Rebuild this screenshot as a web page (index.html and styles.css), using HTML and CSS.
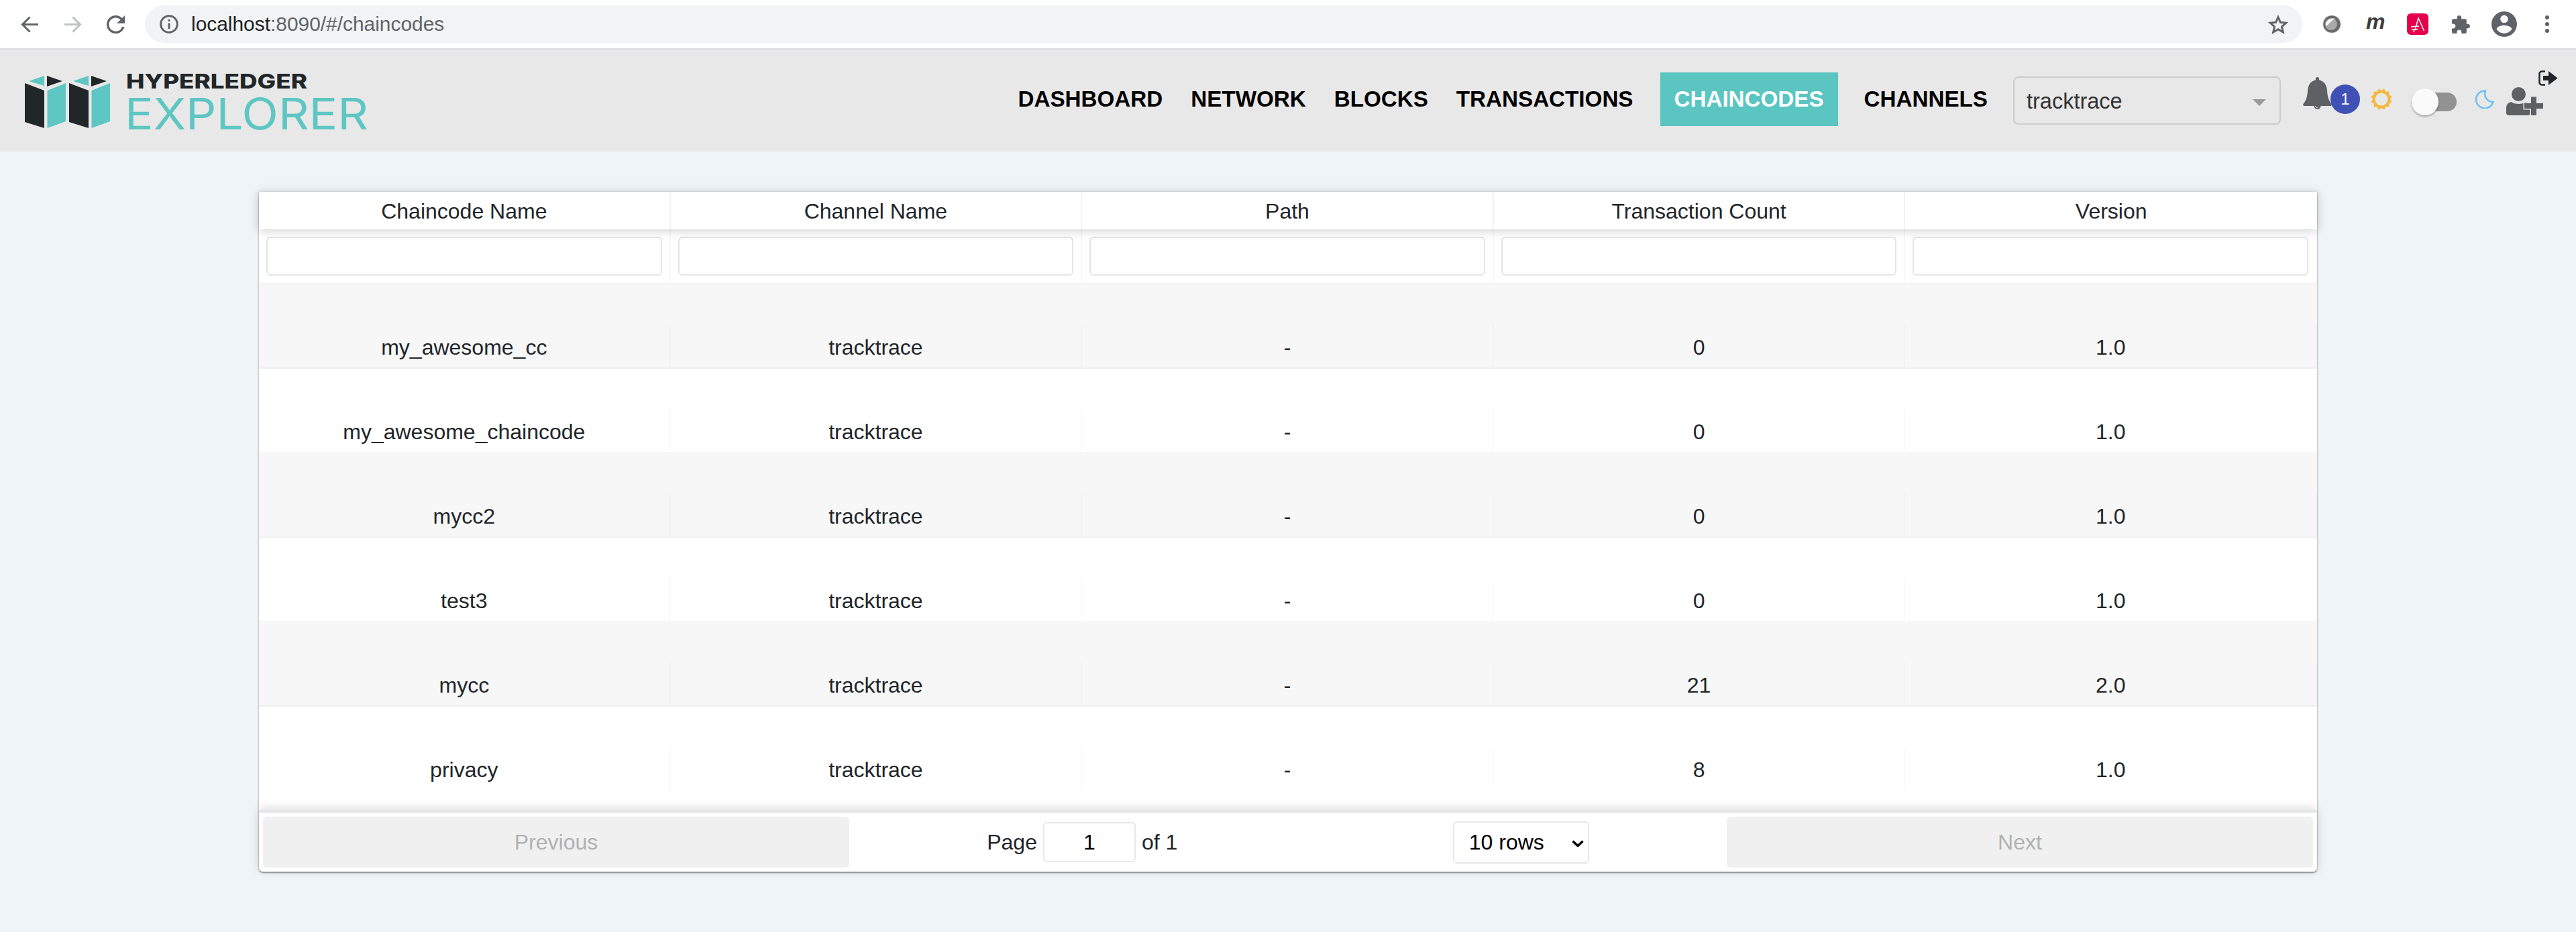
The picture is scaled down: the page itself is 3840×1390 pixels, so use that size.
FILE: index.html
```html
<!DOCTYPE html>
<html lang="en">
<head>
<meta charset="utf-8">
<title>Hyperledger Explorer</title>
<link rel="stylesheet" href="styles.css">
</head>
<body>
<div class="chrome">
  <svg class="c-back" viewBox="0 0 27 25"><path d="M26 12.5H3M13.500 1.500 2.500 12.500 13.500 23.500"/></svg>
  <svg class="c-fwd" viewBox="0 0 27 25"><path d="M1 12.500H24M13.500 1.500 24.500 12.500 13.500 23.500"/></svg>
  <svg class="c-reload" viewBox="4 4 16 16"><path d="M17.65 6.35A7.958 7.958 0 0 0 12 4c-4.42 0-7.99 3.58-7.99 8s3.57 8 7.990 8c3.73 0 6.84-2.55 7.730-6h-2.080A5.990 5.990 0 0 1 12 18c-3.310 0-6-2.690-6-6s2.690-6 6-6c1.660 0 3.140.690 4.220 1.780L13 11h7V4l-2.350 2.350z"/></svg>
  <div class="omnibox">
    <svg class="c-info" viewBox="0 0 28 28"><circle cx="14" cy="14" r="12.300"/><path d="M14 12.500V21M14 7v3"/></svg>
    <span class="url"><span class="url-host">localhost</span>:8090/#/chaincodes</span>
    <svg class="c-star" viewBox="0 0 30 29"><path d="M15 3.500 18.400 11.300 26.800 12.100 20.500 17.700 22.300 26 15 21.700 7.700 26 9.500 17.700 3.200 12.100 11.600 11.300Z"/></svg>
  </div>
  <svg class="ext-lens" viewBox="0 0 28 28"><circle cx="14" cy="14" r="14" fill="#e6e6e6"/><circle cx="14" cy="14" r="12.800" fill="#6a6a6a"/><circle cx="13" cy="14" r="9" fill="#a9a9a9"/><path d="M5 17C4 9 12 4 19 6 14 8 11 13 5 17Z" fill="#f6f6f6"/></svg>
  <span class="ext-m">m</span>
  <svg class="ext-red" viewBox="0 0 32 32"><rect width="32" height="32" rx="6" fill="#e4004a"/><path d="M12 25 17 7 25.500 26M6 20 18 19M7 24.500 16 23.500M11 24 10 28" fill="none" stroke="#fff" stroke-width="1.500"/></svg>
  <svg class="c-puzzle" viewBox="2 1 21 21"><path d="M20.500 11H19V7c0-1.100-.9-2-2-2h-4V3.500C13 2.120 11.880 1 10.500 1S8 2.120 8 3.500V5H4c-1.100 0-1.990.9-1.990 2v3.800H3.500c1.490 0 2.700 1.210 2.700 2.700s-1.210 2.700-2.700 2.700H2V20c0 1.100.9 2 2 2h3.800v-1.500c0-1.490 1.210-2.700 2.700-2.700 1.490 0 2.700 1.210 2.700 2.700V22H17c1.100 0 2-.9 2-2v-4h1.500c1.380 0 2.500-1.120 2.500-2.500S21.880 11 20.500 11z"/></svg>
  <svg class="c-avatar" viewBox="2 2 20 20"><path d="M12 2C6.480 2 2 6.480 2 12s4.480 10 10 10 10-4.480 10-10S17.520 2 12 2zm0 3c1.660 0 3 1.340 3 3s-1.340 3-3 3-3-1.340-3-3 1.340-3 3-3zm0 14.200c-2.500 0-4.710-1.280-6-3.220.03-1.990 4-3.080 6-3.080 1.990 0 5.970 1.090 6 3.080-1.290 1.940-3.500 3.220-6 3.220z"/></svg>
  <svg class="c-dots" viewBox="0 0 6 26"><circle cx="3" cy="3" r="3"/><circle cx="3" cy="13" r="3"/><circle cx="3" cy="23" r="3"/></svg>
</div>

<header class="topbar">
  <svg class="logo" viewBox="37 96 515 120">
    <g class="logo-dark">
      <path d="M37 124 66 135V191L37 182Z"/><path d="M70 113 93 121 70 129Z"/>
      <path d="M103 124 132 135V191L103 182Z"/><path d="M136 113 159 121 136 129Z"/>
    </g>
    <g class="logo-teal">
      <path d="M70.500 135 98 124V181L70.500 191Z"/><path d="M43 121 66 113V128Z"/>
      <path d="M136.500 135 164 124V181L136.500 191Z"/><path d="M109 121 132 113V128Z"/>
    </g>
    <text class="logo-top" x="188" y="132" textLength="270" lengthAdjust="spacingAndGlyphs">HYPERLEDGER</text>
    <text class="logo-bottom" x="186" y="193" textLength="363" lengthAdjust="spacingAndGlyphs">EXPLORER</text>
  </svg>
  <nav class="nav">
    <a class="nav-link">DASHBOARD</a>
    <a class="nav-link">NETWORK</a>
    <a class="nav-link">BLOCKS</a>
    <a class="nav-link">TRANSACTIONS</a>
    <a class="nav-link nav-active">CHAINCODES</a>
    <a class="nav-link nav-last">CHANNELS</a>
  </nav>
  <div class="channel-select">
    <span>tracktrace</span>
    <svg class="channel-caret" viewBox="0 0 20 10"><path d="M0 0H20L10 10Z"/></svg>
  </div>
  <div class="bell">
    <svg class="bell-icon" viewBox="0 0 43 48">
      <path d="M21.500 0c-1.600 0-2.600 1.100-2.600 2.700v1.500C11 6 7.500 12.500 7 20c-.6 10-2.500 15-5.800 19-1 1.200-1.400 2-1 3 .3.700 1 1 1.800 1h39c.8 0 1.500-.3 1.800-1 .4-1 0-1.800-1-3-3.300-4-5.200-9-5.800-19-.5-7.500-4-14-11.900-15.800V2.700C24.100 1.100 23.100 0 21.500 0z"/>
      <circle cx="21.500" cy="43" r="5"/><path class="bell-shine" d="M18.500 43a3 3 0 0 0 4 2.500"/>
    </svg>
    <span class="badge">1</span>
  </div>
  <svg class="sun" viewBox="0 0 32 32">
    <rect x="4.700" y="4.700" width="22.600" height="22.600"/>
    <rect x="4.700" y="4.700" width="22.600" height="22.600" transform="rotate(30 16 16)"/>
    <rect x="4.700" y="4.700" width="22.600" height="22.600" transform="rotate(60 16 16)"/>
    <circle class="sun-core" cx="16" cy="16" r="9.500"/>
  </svg>
  <div class="toggle"><span class="toggle-knob"></span></div>
  <svg class="moon" viewBox="0 0 28 28"><path d="M15 1.500A13 13 0 1 0 26.500 18 12 12 0 0 1 15 1.500Z"/></svg>
  <div class="user">
    <svg class="logout" viewBox="0 0 29 23">
      <path class="logout-frame" d="M10 1.500H5A3.500 3.500 0 0 0 1.500 5V18A3.500 3.500 0 0 0 5 21.500H10"/>
      <path d="M7 8H15V1L28.500 11.500 15 22V15H7Z"/>
    </svg>
    <svg class="user-plus" viewBox="0 0 55 42">
      <circle cx="18.500" cy="10.500" r="10.500"/>
      <path d="M7 22C3 23 0 26 0 31v7c0 2.500 1.500 4 4 4h28c2.500 0 4-1.500 4-4V31c0-5-3-8-7-9-3 2-6.500 3-10.500 3S10 24 7 22Z"/>
      <path class="plus-edge" d="M37 14.500h8v9.500h10v8H45v10h-8V32H27v-8h10Z"/>
    </svg>
  </div>
</header>

<main class="content">
  <section class="table">
    <div class="thead">
      <div class="th">Chaincode Name</div>
      <div class="th">Channel Name</div>
      <div class="th">Path</div>
      <div class="th">Transaction Count</div>
      <div class="th th-last">Version</div>
    </div>
    <div class="filters">
      <div class="filter"><input class="filter-input" type="text"></div>
      <div class="filter"><input class="filter-input" type="text"></div>
      <div class="filter"><input class="filter-input" type="text"></div>
      <div class="filter"><input class="filter-input" type="text"></div>
      <div class="filter filter-last"><input class="filter-input" type="text"></div>
    </div>
    <div class="tbody">
      <div class="row row-odd"><div class="td">my_awesome_cc</div><div class="td">tracktrace</div><div class="td">-</div><div class="td">0</div><div class="td td-last">1.0</div></div>
      <div class="row"><div class="td">my_awesome_chaincode</div><div class="td">tracktrace</div><div class="td">-</div><div class="td">0</div><div class="td td-last">1.0</div></div>
      <div class="row row-odd"><div class="td">mycc2</div><div class="td">tracktrace</div><div class="td">-</div><div class="td">0</div><div class="td td-last">1.0</div></div>
      <div class="row"><div class="td">test3</div><div class="td">tracktrace</div><div class="td">-</div><div class="td">0</div><div class="td td-last">1.0</div></div>
      <div class="row row-odd"><div class="td">mycc</div><div class="td">tracktrace</div><div class="td">-</div><div class="td">21</div><div class="td td-last">2.0</div></div>
      <div class="row row-end"><div class="td">privacy</div><div class="td">tracktrace</div><div class="td">-</div><div class="td">8</div><div class="td td-last">1.0</div></div>
    </div>
    <div class="pager">
      <button class="pager-btn" disabled>Previous</button>
      <div class="pager-center">
        <div class="page-info">
          <span>Page</span>
          <input class="page-input" type="text" value="1">
          <span>of 1</span>
        </div>
        <div class="size-wrap">
          <select class="size-select"><option>10 rows</option></select>
          <svg class="size-chevron" viewBox="0 0 18 10"><path d="M1.500 1.500 9 8.500 16.500 1.500"/></svg>
        </div>
      </div>
      <button class="pager-btn" disabled>Next</button>
    </div>
  </section>
</main>
</body>
</html>
```

FILE: styles.css
```css
* { box-sizing: border-box; }
html, body { margin: 0; padding: 0; }
body {
  width: 3840px;
  height: 1390px;
  overflow: hidden;
  background: #eff4f8;
  font-family: "Liberation Sans", Arial, sans-serif;
  font-size: 32px;
  color: #212529;
}

/* browser toolbar */
.chrome {
  height: 74px;
  display: flex;
  align-items: center;
  padding-left: 31px;
  background: #fff;
  border-bottom: 2px solid #dadce0;
}
.c-back, .c-fwd { width: 27px; height: 25px; fill: none; stroke-width: 3; }
.c-back { stroke: #5f6368; }
.c-fwd { stroke: #bdc1c6; margin-left: 37px; }
.c-reload { width: 27px; height: 27px; fill: #5f6368; margin-left: 37px; }
.omnibox {
  width: 3216px;
  height: 56px;
  margin-left: 30px;
  padding: 0 21px 0 22px;
  display: flex;
  align-items: center;
  background: #f1f3f4;
  border-radius: 28px;
}
.c-info { width: 28px; height: 28px; fill: none; stroke: #5f6368; stroke-width: 3; }
.url { margin-left: 19px; font-size: 29.900px; color: #5f6368; white-space: nowrap; }
.url-host { color: #202124; }
.c-star { width: 30px; height: 29px; margin-left: auto; fill: none; stroke: #5f6368; stroke-width: 3; }
.ext-lens { width: 28px; height: 28px; margin-left: 30px; }
.ext-m {
  width: 28px;
  margin-left: 37px;
  margin-bottom: 8px;
  font-size: 32px;
  font-weight: 700;
  font-style: italic;
  line-height: 1;
  color: #3c3c3c;
}
.ext-red { width: 32px; height: 32px; margin-left: 33px; }
.c-puzzle { width: 29px; height: 27px; margin-left: 34px; fill: #5f6368; }
.c-avatar { width: 38px; height: 38px; margin-left: 31px; fill: #5f6368; }
.c-dots { width: 6px; height: 26px; margin-left: 42px; fill: #5f6368; }

/* app header */
.topbar {
  height: 152px;
  display: flex;
  align-items: flex-start;
  padding: 0 27px 0 37px;
  background: #e8e8e8;
}
.logo { width: 515px; height: 120px; margin-top: 22px; flex: none; }
.logo-dark { fill: #212629; }
.logo-teal { fill: #5ec6c3; }
.logo-top { font-family: Inter, sans-serif; font-weight: 800; font-size: 30px; fill: #212629; }
.logo-bottom { font-family: Inter, sans-serif; font-weight: 400; font-size: 65px; fill: #5ec6c3; }
.nav { margin-left: auto; margin-top: 34px; display: flex; align-items: stretch; height: 80px; }
.nav-link {
  display: flex;
  align-items: center;
  padding: 0 21px;
  font-size: 33.200px;
  font-weight: 700;
  color: #000;
  white-space: nowrap;
}
.nav-active { background: #5bc5c2; color: #fff; margin-left: 19px; }
.nav-last { margin-left: 18px; }
.channel-select {
  width: 399px;
  height: 72px;
  margin: 40px 0 0 17px;
  padding: 3px 20px 0 18px;
  display: flex;
  align-items: center;
  justify-content: space-between;
  border: 2px solid #ccc;
  border-radius: 8px;
  font-size: 32.500px;
  color: #333;
}
.channel-caret { width: 20px; height: 10px; fill: #999; margin-top: 2px; }
.bell { position: relative; width: 85px; height: 55px; margin: 41px 0 0 33px; }
.bell-icon { width: 43px; height: 48px; fill: #5f6064; display: block; }
.bell-shine { fill: none; stroke: #d8d8d8; stroke-width: 1; }
.badge {
  position: absolute;
  left: 41px;
  top: 11px;
  width: 44px;
  height: 44px;
  display: flex;
  align-items: center;
  justify-content: center;
  border-radius: 50%;
  background: #3f51b5;
  color: #fff;
  font-size: 24px;
}
.sun { width: 32px; height: 32px; margin: 58px 0 0 16px; fill: #f5b83d; }
.sun-core { fill: #e8e8e8; }
.toggle {
  position: relative;
  width: 52px;
  height: 28px;
  margin: 64px 0 0 44px;
  border-radius: 14px;
  background: #929292;
}
.toggle-knob {
  position: absolute;
  left: -15px;
  top: -6px;
  width: 40px;
  height: 40px;
  border-radius: 50%;
  background: #fafafa;
  box-shadow: 0 2px 3px rgba(0, 0, 0, .3);
}
.moon { width: 28px; height: 28px; margin: 60px 0 0 28px; fill: none; stroke: #6cc0f4; stroke-width: 2.500; }
.user { position: relative; width: 77px; height: 98px; margin: 30px 0 0 18px; }
.logout { position: absolute; right: 0; top: 1px; width: 29px; height: 23px; fill: #212529; }
.logout-frame { fill: none; stroke: #212529; stroke-width: 2.500; }
.user-plus { position: absolute; left: 0; top: 26px; width: 55px; height: 42px; fill: #5f6064; }
.plus-edge { stroke: #e8e8e8; stroke-width: 3; paint-order: stroke; }

/* content */
.content { padding: 60px 386px 0; }
.table {
  height: 1014px;
  display: flex;
  flex-direction: column;
  background: #fff;
  border-radius: 0 0 6px 6px;
  box-shadow: 0 2px 2px rgba(0, 0, 0, .38), 0 0 3px rgba(0, 0, 0, .22);
}
.thead {
  position: relative;
  z-index: 1;
  height: 56px;
  display: grid;
  grid-template-columns: repeat(5, 1fr);
  background: #fff;
  box-shadow: 0 2px 15px rgba(0, 0, 0, .19);
}
.th {
  display: flex;
  align-items: center;
  justify-content: center;
  padding-top: 2px;
  border-right: 2px solid rgba(0, 0, 0, .05);
}
.th-last, .filter-last, .td-last { border-right: 0; }
.filters {
  height: 82px;
  display: grid;
  grid-template-columns: repeat(5, 1fr);
  border-bottom: 2px solid rgba(0, 0, 0, .05);
}
.filter {
  padding: 11px;
  border-right: 2px solid rgba(0, 0, 0, .03);
}
.filter-input {
  display: block;
  width: 100%;
  height: 58px;
  background: #fff;
  border: 2px solid #e5e5e5;
  border-radius: 6px;
  outline: none;
}
.tbody { flex: 1; }
.row {
  height: 126px;
  display: grid;
  grid-template-columns: repeat(5, 1fr);
  border-bottom: 2px solid rgba(0, 0, 0, .03);
}
.row-odd { background: #f7f7f7; }
.row-end { height: 124px; border-bottom: 0; }
.td {
  align-self: end;
  height: 64px;
  padding-top: 4px;
  display: flex;
  align-items: center;
  justify-content: center;
  white-space: nowrap;
  border-right: 2px solid rgba(0, 0, 0, .02);
}
.pager {
  position: relative;
  height: 92px;
  display: flex;
  align-items: stretch;
  padding: 6px;
  background: #fff;
  border-top: 4px solid #e5e5e5;
  border-radius: 0 0 6px 6px;
  box-shadow: 0 -2px 15px rgba(0, 0, 0, .15);
}
.pager-btn {
  flex: none;
  width: 874px;
  border: 0;
  border-radius: 6px;
  background: #f0f0f0;
  font: inherit;
  color: #b1b1b1;
}
.pager-center { flex: 1; display: flex; align-items: center; justify-content: space-around; }
.page-info { display: flex; align-items: center; gap: 9px; }
.page-input {
  width: 138px;
  height: 60px;
  background: #fff;
  border: 2px solid #e8e8e8;
  border-radius: 6px;
  font: inherit;
  color: #000;
  text-align: center;
  outline: none;
}
.size-wrap { position: relative; }
.size-select {
  display: block;
  width: 203px;
  height: 63px;
  padding: 0 0 0 22px;
  appearance: none;
  background: #fff;
  border: 2px solid #e8e8e8;
  border-radius: 6px;
  font: inherit;
  color: #000;
  outline: none;
}
.size-chevron {
  position: absolute;
  right: 8px;
  top: 28px;
  width: 18px;
  height: 10px;
  fill: none;
  stroke: #000;
  stroke-width: 3.500;
}
```
